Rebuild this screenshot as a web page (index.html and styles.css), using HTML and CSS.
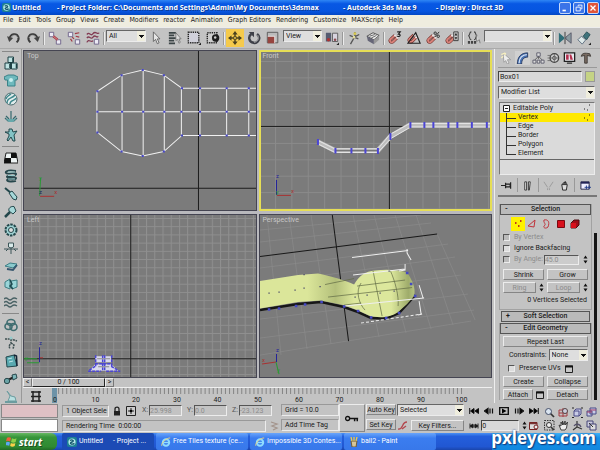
FILE: index.html
```html
<!DOCTYPE html>
<html lang="en">
<head>
<meta charset="utf-8">
<title>Untitled - Autodesk 3ds Max 9</title>
<link rel="stylesheet" href="styles.css">
</head>
<body>
<svg class="defs" aria-hidden="true">
  <symbol id="spin" viewBox="0 0 5 9"><path d="M2.500 0.500L4.500 3.500H.5zM2.500 8.500L.5 5.500H4.500z" fill="#111"/></symbol>
  <symbol id="ie" viewBox="0 0 10 10"><circle cx="5" cy="5.500" r="3.200" fill="none" stroke="#8fdcff" stroke-width="2"/><path d="M3 5.500H8" stroke="#8fdcff" stroke-width="1.300"/><path d="M.8 8.800C-.3 6 6 .5 9.200 1" fill="none" stroke="#f2d67a" stroke-width=".9"/></symbol>
  <symbol id="max" viewBox="0 0 10 10"><rect width="10" height="10" rx="2" fill="#1c7f95"/><circle cx="5" cy="5" r="3.600" fill="#b8ece9"/><path d="M3 3.500C5 2 8 4 5 5S4 8 7.500 6.500" fill="none" stroke="#14566e" stroke-width="1.400"/></symbol>
  <symbol id="magnet" viewBox="0 0 16 16"><path d="M12 7L7 12C4 15 1 11 4 8.500L9 4" fill="none" stroke="#70302c" stroke-width="4"/><path d="M12 7L7 12C4 15 1 11 4 8.500L9 4" fill="none" stroke="#d9837a" stroke-width="2.400"/><path d="M8.500 3.500L10 5.500M11 6.500L13 8" stroke="#eee" stroke-width="2"/></symbol>
  <symbol id="win" viewBox="0 0 8 8"><path d="M.5 1H7.500V7.500H.5z" fill="#c8c8c8" stroke="#222"/><path d="M0 1.500H8" stroke="#111" stroke-width="2"/></symbol>
</svg>

<header class="title">
  <svg class="app"><use href="#max"/></svg>
  <h1><span class="doc">Untitled</span><span class="folder">- Project Folder: C:\Documents and Settings\Admin\My Documents\3dsmax</span><span class="prod">- Autodesk 3ds Max 9</span><span>- Display : Direct 3D</span></h1>
  <div class="winbtns">
    <button aria-label="Minimize"><svg viewBox="0 0 12 12"><path d="M3 9H7" stroke="#fff" stroke-width="2"/></svg></button>
    <button aria-label="Restore"><svg viewBox="0 0 12 12"><path d="M5 4V2.500H9.500V7H8M2.500 5H7.500V9.500H2.500z" fill="none" stroke="#fff"/></svg></button>
    <button class="close" aria-label="Close"><svg viewBox="0 0 12 12"><path d="M3 3L9 9M9 3L3 9" stroke="#fff" stroke-width="1.600"/></svg></button>
  </div>
</header>

<nav class="menu">
  <a href="#">File</a><a href="#">Edit</a><a href="#">Tools</a><a href="#">Group</a><a href="#">Views</a><a href="#">Create</a><a href="#">Modifiers</a><a href="#">reactor</a><a href="#">Animation</a><a href="#">Graph Editors</a><a href="#">Rendering</a><a href="#">Customize</a><a href="#">MAXScript</a><a href="#">Help</a>
</nav>

<div class="toolbar">
  <button aria-label="Undo"><svg viewBox="0 0 16 16"><path d="M3 9C4 3 11 2 13 7C14 10 12 12 11 13" fill="none" stroke="#3c3c3c" stroke-width="2.400"/><path d="M4 8.500C5 4 11 3.500 12.500 8" fill="none" stroke="#bbb" stroke-width=".8"/><path d="M0 6L2.500 12.500L7 8z" fill="#444"/></svg></button>
  <button aria-label="Redo"><svg viewBox="0 0 16 16"><path d="M13 9C12 3 5 2 3 7C2 10 4 12 5 13" fill="none" stroke="#3c3c3c" stroke-width="2.400"/><path d="M12 8.500C11 4 5 3.500 3.500 8" fill="none" stroke="#bbb" stroke-width=".8"/><path d="M16 6L13.500 12.500L9 8z" fill="#444"/></svg></button>
  <i class="sep"></i>
  <button aria-label="Link"><svg viewBox="0 0 16 16"><g fill="#eceaf4" stroke="#6a5f86"><path d="M1.500 1.500H6.500V6.500H1.500zM9.500 10H14.500V15H9.500z"/></g><path d="M6 6L11 10" stroke="#a33844" stroke-width="2.600"/><path d="M6 6L11 10" stroke="#eaa" stroke-width=".8"/></svg></button>
  <button aria-label="Unlink"><svg viewBox="0 0 16 16"><g fill="#eceaf4" stroke="#6a5f86"><path d="M1.500 1.500H6.500V6.500H1.500zM9.500 10H14.500V15H9.500z"/></g><path d="M4 9L6 12M9 3L14 2M10 6L14 7M6 7L8 9" stroke="#a33844" stroke-width="1.400"/></svg></button>
  <button aria-label="Bind"><svg viewBox="0 0 16 16"><path d="M1 4C4 0 5 7 8 3S13 5 15 2M1 8C4 4 5 11 8 7S12 9 14 6M1 13C3 8 6 14 8 11" fill="none" stroke="#823a52" stroke-width="1.500"/><path d="M9.500 9.500H14.500V15H9.500z" fill="#eceaf4" stroke="#6a5f86"/></svg></button>
  <i class="sep"></i>
  <span class="dd filter"><select aria-label="Selection filter"><option>All</option></select></span>
  <button aria-label="Select"><svg viewBox="0 0 16 16"><path d="M5 1V12L7.500 9.500L9.500 14.500L11.500 13.500L9.500 9H12.500z" fill="#e6e6e6" stroke="#555" stroke-width=".9"/></svg></button>
  <button aria-label="Select by name"><svg viewBox="0 0 16 16"><path d="M1 2H9M1 5H7M1 8H9M1 11H7M1 14H8" stroke="#3c4547" stroke-width="2"/><path d="M9 2V11L11 9.500L12.500 14L14 13L12.500 9H15z" fill="#ddd" stroke="#666" stroke-width=".8"/></svg></button>
  <button aria-label="Region"><svg viewBox="0 0 16 16"><path d="M1.500 1.500H13.500V13.500H1.500z" fill="#d0d0da" stroke="#222" stroke-width="1.600" stroke-dasharray="1.500 1"/><path d="M16 13V16H13z" fill="#222"/></svg></button>
  <button aria-label="Window crossing"><svg viewBox="0 0 16 16"><path d="M1.500 2H12.500V13.500H1.500z" fill="#ccc" stroke="#222" stroke-width="1.600" stroke-dasharray="1.500 1"/><circle cx="11" cy="8" r="4.200" fill="#1c1c1c"/><circle cx="10.500" cy="7.500" r="1.400" fill="#ccc"/></svg></button>
  <i class="sep"></i>
  <button class="on" aria-label="Move"><svg viewBox="0 0 16 16"><path d="M8 2V14M2 8H14" stroke="#49411e" stroke-width="1.600"/><path d="M8 0L11 4H5zM8 16L5 12H11zM0 8L4 5V11zM16 8L12 11V5z" fill="#49411e"/><path d="M6.500 6.500H9.500V9.500H6.500z" fill="#f7cf55" stroke="#49411e"/></svg></button>
  <button aria-label="Rotate"><svg viewBox="0 0 16 16"><path d="M11.500 3.500C17 8 12 14.500 7.500 13.500C2 13 1 6 5 3.500" fill="none" stroke="#3e4048" stroke-width="2.800"/><path d="M12 4.500C15 8 12 13 8 13" fill="none" stroke="#bbb" stroke-width=".8"/><path d="M2 1H8V7z" fill="#3e4048"/></svg></button>
  <button aria-label="Scale"><svg viewBox="0 0 16 16"><path d="M1.500 1.500H13.500V13.500H1.500z" fill="#bbb" stroke="#555"/><path d="M2 6H10V14H2z" fill="#97453f"/><path d="M2 6H10V14" fill="none" stroke="#eee"/></svg></button>
  <span class="dd coord"><select aria-label="Coordinate system"><option>View</option></select></span>
  <button aria-label="Pivot"><svg viewBox="0 0 16 16"><path d="M1 2H7V12H1z" fill="#555b70"/><path d="M8.500 2.500H14.500V12H8.500z" fill="#d7d3df" stroke="#555"/><circle cx="4" cy="10" r="2" fill="#a33"/><circle cx="11.500" cy="10" r="1.500" fill="#8b4b50"/><path d="M16 13V16H13z" fill="#222"/></svg></button>
  <i class="sep"></i>
  <button aria-label="Manipulate"><svg viewBox="0 0 16 16"><path d="M9 1V6L4 15M3 5L13 9M8 7L14 4" fill="none" stroke="#555" stroke-width="1.500"/><circle cx="9" cy="3" r="1.700" fill="#d6c84f"/><circle cx="8" cy="7" r="1.500" fill="#e3dc9a"/></svg></button>
  <button aria-label="Keyboard override"><svg viewBox="0 0 16 16"><path d="M1 6L8 2L15 5L9 10z" fill="#eee" stroke="#444"/><path d="M1 6L9 10V15L2 11z" fill="#667"/><path d="M9 10L15 5V10L9 15z" fill="#999"/><path d="M4 6L10 4M6 8L12 5" stroke="#555"/></svg></button>
  <i class="sep"></i>
  <button aria-label="Snap 3D"><svg viewBox="0 0 16 16"><use href="#magnet" y="1" width="14" height="15"/><path d="M10.500 1H14L12 3.500C15 3.500 14.500 7 10.500 6" fill="none" stroke="#222" stroke-width="1.300"/></svg></button>
  <button aria-label="Angle snap"><svg viewBox="0 0 16 16"><use href="#magnet" y="1" width="14" height="14"/><path d="M1 14H15L10 2z" fill="none" stroke="#222" stroke-width="1.300"/></svg></button>
  <button aria-label="Percent snap"><svg viewBox="0 0 16 16"><use href="#magnet" y="1" width="14" height="15"/><path d="M10 7L15 1" stroke="#222"/><circle cx="10.500" cy="2.500" r="1.400" fill="none" stroke="#222"/><circle cx="14" cy="6" r="1.400" fill="none" stroke="#222"/></svg></button>
  <button aria-label="Spinner snap"><svg viewBox="0 0 16 16"><use href="#magnet" y="1" width="14" height="15"/><path d="M10 1H15V11H10z" fill="#ccc" stroke="#333"/><path d="M12.500 2L14 5H11zM12.500 10L11 7H14z" fill="#222"/></svg></button>
  <i class="sep"></i>
  <button aria-label="Named selections"><svg viewBox="0 0 16 16"><path d="M5 1C2 1 4 5 1.500 5.500C4 6 2 10 5 10M8 1C11 1 9 5 11.500 5.500C9 6 11 10 8 10" fill="none" stroke="#444" stroke-width="1.200"/><path d="M1 13H11" stroke="#444" stroke-width="3" stroke-dasharray="2.500 1"/><path d="M11 4V12L14 10L15 14" fill="#ddd" stroke="#777"/></svg></button>
  <span class="dd sets"><select aria-label="Selection sets"><option></option></select></span>
  <i class="sep"></i>
  <button aria-label="Mirror"><svg viewBox="0 0 16 16"><path d="M1 2L7 7V9L1 14z" fill="#2f6e78"/><path d="M15 2L9 7V9L15 14z" fill="#8b9aa0" stroke="#556"/><path d="M8 1V15" stroke="#333"/></svg></button>
  <button aria-label="Align"><svg viewBox="0 0 16 16"><path d="M1 10L5 6L10 10L6 15z" fill="#dfeaea" stroke="#567"/><path d="M7 6L11 1L15 4L11 10z" fill="#3f737b" stroke="#2c5057"/><path d="M16 13V16H13z" fill="#222"/></svg></button>
</div>

<main class="work">
  <aside class="side">
    <hr>
    <button aria-label="Rigid bodies"><svg viewBox="0 0 14 14"><g fill="#bfe3e3" stroke="#1f4145"><path d="M4 1H9.500V6.500H4zM1 7H6.500V13H1zM7.500 7H13V13H7.500z"/></g><path d="M9 2V6M6 8V12M12.500 8V12" stroke="#1f4145" stroke-width="1.600"/></svg></button>
    <button aria-label="Cloth"><svg viewBox="0 0 14 14"><path d="M0 3L4 1H10L14 3L13 6H11V12H3.500V6H1z" fill="#6fb9bd" stroke="#3b8288"/><circle cx="7" cy="6" r="2" fill="#c6eeee"/></svg></button>
    <button aria-label="Soft body"><svg viewBox="0 0 14 14"><circle cx="7" cy="7" r="6" fill="#e2eded" stroke="#496b6e"/><path d="M3 11C3 5 8 7 11 3M6 12C6 8 11 9 12 6M2 7C3 3 5 4 7 2" fill="none" stroke="#40888c" stroke-width="1.500"/></svg></button>
    <button aria-label="Rope"><svg viewBox="0 0 14 14"><path d="M7 1V9M1 8L4 11H10L13 8M2 6L5 9M12 6L9 9" fill="none" stroke="#35696e" stroke-width="1.200"/><path d="M2 9H12L9 12H5z" fill="#67a8ab"/></svg></button>
    <button aria-label="Deforming mesh"><svg viewBox="0 0 14 14"><path d="M5 1L8 1L9 4L13 3L10 7L11 13L9 13L7 9L4 13L3 12L5 8L5 6L1 4L5 4z" fill="#83c3c5" stroke="#22484c"/></svg></button>
    <hr>
    <button aria-label="Plane"><svg viewBox="0 0 14 14"><path d="M2 2H12L14 12H0z" fill="#eef4f4" stroke="#222"/><path d="M7 2H12L13 7H7zM1 7H7V12H0z" fill="#111"/></svg></button>
    <button aria-label="Spring"><svg viewBox="0 0 14 14"><path d="M12 2C2 0 0 4 3 4.500S13 3 12 5.500S2 6 3 8S13 7 12 9.500S3 9 3 11S9 13 12 12" fill="none" stroke="#27474c" stroke-width="1.800"/><path d="M4 3H11M4 6.500H11M4 10H11" stroke="#98cccd"/></svg></button>
    <button aria-label="Dashpot"><svg viewBox="0 0 14 14"><path d="M1 1L7 6" stroke="#23474b" stroke-width="2"/><path d="M5 6L8 4L13 10L12 13L9 12z" fill="#a6d8d9" stroke="#23474b"/></svg></button>
    <button aria-label="Linear dashpot"><svg viewBox="0 0 14 14"><path d="M1 12L6 7" stroke="#23474b" stroke-width="2.500"/><path d="M5 6C4 3 7 1 10 1.500L12 6L9 9z" fill="#a6d8d9" stroke="#23474b"/></svg></button>
    <button aria-label="Motor"><svg viewBox="0 0 14 14"><circle cx="7" cy="7" r="5.500" fill="#9fd3d4" stroke="#23474b" stroke-width="2" stroke-dasharray="2.500 1"/><circle cx="7" cy="7" r="2.500" fill="#ddd" stroke="#23474b"/></svg></button>
    <button aria-label="Wind"><svg viewBox="0 0 14 14"><path d="M0 8H14M7 4V13M4 8L2 10M10 8L12 10" stroke="#3c5558"/><path d="M4.500 2H9.500V6L7 7L4.500 6z" fill="#d9eaea" stroke="#3c5558"/></svg></button>
    <button aria-label="Toy car"><svg viewBox="0 0 14 14"><path d="M1 7L6 4L13 5L9 9z" fill="#8bcacd" stroke="#3d7e86"/><path d="M3 10L9 11L13 6" fill="none" stroke="#36566e" stroke-width="1.800"/></svg></button>
    <button aria-label="Fracture"><svg viewBox="0 0 14 14"><path d="M1 5L6 2V12L1 10zM7 4L13 3V10L8 12z" fill="#9ad5d8" stroke="#3c7d83"/><path d="M6 3L8 7L6 9L9 12" fill="none" stroke="#1d4a50" stroke-width="1.500"/></svg></button>
    <button aria-label="Water"><svg viewBox="0 0 14 14"><path d="M0 4Q2 2 4 4T8 4T13 4M0 7.500Q2 5.500 4 7.500T8 7.500T13 7.500M0 11Q2 9 4 11T8 11T13 11" fill="none" stroke="#4a6265" stroke-width="1.300"/></svg></button>
    <hr>
    <button aria-label="Constraint solver"><svg viewBox="0 0 14 14"><g fill="none" stroke="#3f6d70" stroke-width="1.600"><ellipse cx="7" cy="4.500" rx="4" ry="3"/><ellipse cx="4.500" cy="8.500" rx="3.500" ry="3"/><ellipse cx="9.500" cy="9" rx="3.500" ry="3.500"/></g></svg></button>
    <button aria-label="Rag doll"><svg viewBox="0 0 14 14"><path d="M1 3H7L13 5M7 3V7L5 10L6 13M7 7L10 9L9 13" fill="none" stroke="#3f5052" stroke-width="1.500" stroke-dasharray="2 .7"/><circle cx="7" cy="2" r="1.500" fill="#9cc"/></svg></button>
    <button aria-label="Hinge"><svg viewBox="0 0 14 14"><path d="M2 3L10 1L13 12L3 13z" fill="#59a9b0" stroke="#24494e"/><path d="M10 1L12.500 2L13 12" fill="none" stroke="#123" stroke-width="1.500"/><path d="M4 5L8 4M5 8L9 7" stroke="#bfe6e8"/></svg></button>
    <button aria-label="Point to point"><svg viewBox="0 0 14 14"><path d="M4 8L10 5" stroke="#222" stroke-width="2"/><circle cx="3" cy="9" r="2.700" fill="#6aa3a6" stroke="#29484b"/><path d="M8 3L12 2L13 6L9 8z" fill="#7fb7ba" stroke="#29484b"/></svg></button>
    <button aria-label="Prismatic"><svg viewBox="0 0 14 14"><path d="M3 1L6 6L4 11H12L11 7L7 6z" fill="#b8dfe0" stroke="#6c9c9f"/><path d="M1 12H13" stroke="#6c9c9f" stroke-width="2"/></svg></button>
  </aside>

  <section class="center">
    <div class="views">
      <div class="vp"><span>Top</span>
        <svg viewBox="24 51 231 158" preserveAspectRatio="xMinYMin slice">
          <path d="M197.500 50V212M23 187.500H257" stroke="#1d1d1d"/>
          <g fill="none" stroke="#f1f1f1"><path d="M97 91L121 75L142 70L163 75L181 88H257M97 132L121 151L142 155.500L163 151L181 135H257M97 111.500H257M96.500 91V132M121.500 75V151M142.500 70V155M163.500 75V151M180.500 88V135M199 88V135M225.500 88V135M247.500 88V135"/></g>
          <path d="M97 91h.1M121 75h.1M142 70h.1M163 75h.1M181 88h.1M199 88h.1M225.500 88h.1M247.500 88h.1M97 111.500h.1M121.500 111.500h.1M142.500 111.500h.1M163.500 111.500h.1M180.500 111.500h.1M199 111.500h.1M225.500 111.500h.1M247.500 111.500h.1M97 132h.1M121 151h.1M142 155.500h.1M163 151h.1M181 135h.1M199 135h.1M225.500 135h.1M247.500 135h.1" stroke="#4646c8" stroke-width="2" stroke-linecap="square"/>
          <path d="M39.500 195L40.500 177" stroke="#2a9a35"/><path d="M40 195.500H54" stroke="#a83232"/>
          <text x="39" y="179" fill="#2a9a35">y</text><text x="39" y="193" fill="#1c1c60">z</text><text x="54" y="193" fill="#a83232">x</text>
        </svg>
      </div>
      <div class="vp active"><span>Front</span>
        <svg viewBox="260 52 230 157" preserveAspectRatio="xMinYMin slice">
          <defs><pattern id="g1" x="274" y="61" width="16.400" height="16.400" patternUnits="userSpaceOnUse"><path d="M.5 0V16.400M0 .5H16.400" stroke="#8a8a8a"/></pattern></defs>
          <rect x="258" y="50" width="240" height="170" fill="url(#g1)"/>
          <path d="M388.500 50V212M258 126.500H492" stroke="#1d1d1d"/>
          <g fill="none"><path d="M317 142L334 150.500H377L389.500 136.500L409 125H492" stroke="#bdbdbd" stroke-width="5"/><path d="M317 140.500L334 149H377L389 134.500L409 123.500H492M317 144L334 152.500H377L390 138.500L410 127H492" stroke="#e6e6e6"/><path d="M334 150.500H377" stroke="#777" stroke-width="1.500"/></g>
          <path d="M317 139V145M334.500 148V153.500M350.500 148V153.500M364.500 148V153.500M377 148V154M389.500 133V140M409.500 122V128M423.500 122V128M432.500 122V128M447.500 122V128M456.500 122V128M471 122V128M486 122V128" stroke="#4b45d4" stroke-width="2"/>
          <path d="M275.500 180V195" stroke="#24249a"/><path d="M276 195.500H290" stroke="#a83232"/>
          <text x="275" y="178" fill="#24249a">z</text><text x="275" y="194" fill="#2a9a35">y</text><text x="290" y="193" fill="#a83232">x</text>
        </svg>
      </div>
      <div class="vp"><span>Left</span>
        <svg viewBox="24 214 231 162" preserveAspectRatio="xMinYMin slice">
          <defs><pattern id="g2" x="31" y="217" width="8.200" height="8.200" patternUnits="userSpaceOnUse"><path d="M.5 0V8.200M0 .5H8.200" stroke="#8f8f8f"/></pattern></defs>
          <rect x="23" y="213" width="240" height="170" fill="url(#g2)"/>
          <path d="M130.500 212V380M23 357.500H257" stroke="#1d1d1d"/>
          <path d="M95 355H111V361H95zM95 363H111L118 369.500H89z" fill="#d9d9ee"/>
          <path d="M95.500 354V366M102.500 354V370M104.500 354V370M111.500 354V366M95 362.500H111M88 370H101M106 370H120M95 365L89 369M111 365L118 369" stroke="#4b45d4" stroke-width="1.500" stroke-dasharray="3 1"/><path d="M97 357.500H110M98 365.500H109" stroke="#888"/>
          <path d="M39.500 346V361" stroke="#24249a"/><path d="M40 356.500H43" stroke="#a83232"/><path d="M24 357.500H37M39 361.500H27" stroke="#2a9a35"/>
          <text x="39" y="344" fill="#24249a">z</text><text x="25" y="359" fill="#2a9a35">y</text>
        </svg>
      </div>
      <div class="vp"><span>Perspective</span>
        <svg viewBox="259 214 232 162" preserveAspectRatio="xMinYMin slice">
          <defs><linearGradient id="skin" gradientUnits="userSpaceOnUse" x1="260" y1="0" x2="415" y2="0"><stop offset="0" stop-color="#dbe69a"/><stop offset=".3" stop-color="#dbe69a"/><stop offset=".48" stop-color="#b4c07b"/><stop offset=".6" stop-color="#dce79c"/><stop offset=".84" stop-color="#dce79c"/><stop offset=".95" stop-color="#9fac6b"/><stop offset="1" stop-color="#bdc985"/></linearGradient></defs>
          <path d="M259 229L420 214M259 241L430 222M259 267L447 243M259 283L454 256M259 300L460 274M259 318L467 293M259 337L473 309M259 354L470 320M266 214L280 354M288 214L306 348M310 214L330 343M352 214L378 336M373 214L405 332M394 214L430 328M415 214L452 324M436 233L474 319" stroke="#8b8b8b" stroke-width=".7"/>
          <path d="M259 255.500L436 233M331 212L347.500 340" stroke="#181818"/>
          <path d="M259 309L297 303L320 301L343 306L357 311L370 317L385 317.500L398 312L406 303L414 294" fill="none" stroke="#171717" stroke-width="2.500"/>
          <path d="M259 280L297 274L317 272.500C330 275 343 279 353 283.500C358 275 364 270 374 269.500C386 268 398 269 406 271.500C411 279 415 287 413 295L406 303L397 311C389 317 377 317 369 315L356 309L342 304L320 299.500L297 301L259 307.500z" fill="url(#skin)"/>
          <path d="M324 283.500L353 277.500M327 296L411 286.500M343 304L360 302M360 282C354 290 358 303 364 309M372 270L381 315M389 269C394 280 398 295 397 305M356 285L404 279" fill="none" stroke="#5f6843" stroke-width=".7"/>
          <path d="M351 256.500L407 249.500M406 248V252L410 259M352 274L404 268M404 263V269L398 270M418 284L422 297M344 305L423 297M418 300L420 313M417 314L421 313" fill="none" stroke="#efefef"/><path d="M360 322L420 313" stroke="#efefef" stroke-dasharray="3 2"/>
          <path d="M268 292h.1M278 291h.1M294 289h.1M303 287h.1M319 285.500h.1M354 296h.1M366 294h.1M379 292h.1M393 290h.1M303 273.500h.1M388 270h.1" stroke="#4a4a68" stroke-width="1.200" stroke-linecap="square"/>
          <path d="M268 308.500h.1M278 307.500h.1M295 305h.1M304 303.500h.1M320.500 301h.1M343 305.500h.1M357 310h.1M370 316.500h.1M385 317h.1M398 312h.1M414 295h.1M410 283h.1M406 272h.1" stroke="#4549c4" stroke-width="2.500" stroke-linecap="square"/>
          <path d="M275.500 353V361" stroke="#24249a"/><path d="M261 363L275 361" stroke="#a83232"/><path d="M275 361L278 373" stroke="#2a9a35"/>
          <text x="275" y="351" fill="#24249a">z</text><text x="261" y="361" fill="#a83232">x</text><text x="276" y="371" fill="#2a9a35">y</text>
        </svg>
      </div>
    </div>
    <div class="slider"><button aria-label="Previous frame">&lt;</button><button class="thumb">0 / 100</button><button aria-label="Next frame">&gt;</button></div>
    <svg class="ruler" viewBox="23 387 469 16" preserveAspectRatio="xMinYMin meet">
      <path d="M23 387.500H493" stroke="#efefef"/>
      <path d="M31 392H41M31 396.500H41M31 401H41M33 391V402M39 391V402" stroke="#222" stroke-width="1.500" fill="none"/>
      <rect x="52" y="388" width="5" height="15" fill="#6d93a8"/>
      <path d="M58.100 391H463" stroke="#858585" stroke-width="6" stroke-dasharray="1 3.070"/>
      <g text-anchor="middle"><text x="55" y="402">0</text><text x="95.500" y="402">10</text><text x="136" y="402">20</text><text x="177" y="402">30</text><text x="217.500" y="402">40</text><text x="258" y="402">50</text><text x="299" y="402">60</text><text x="339.500" y="402">70</text><text x="380" y="402">80</text><text x="421" y="402">90</text><text x="461.500" y="402">100</text></g>
    </svg>
  </section>

  <aside class="panel">
    <div class="tabs">
      <button aria-label="Create"><svg viewBox="0 0 14 14"><path d="M3 1L12 9L8 9L10 13L8 14L6 10L4 12z" fill="#eee" stroke="#999"/><path d="M1 3L5 1M1 7L3 5M6 1L5 4" stroke="#f7efc0" stroke-width="1.500"/></svg></button>
      <button class="sel" aria-label="Modify"><svg viewBox="0 0 14 14"><path d="M1 14C1 6 5 1 13 1V6C8 6 6 9 6 14z" fill="#4a74b5" stroke="#26365a"/><path d="M3 13C3 7 7 3 12 3" fill="none" stroke="#d7e2f2" stroke-width="1.500"/></svg></button>
      <button aria-label="Hierarchy"><svg viewBox="0 0 14 14"><path d="M7 4V8M7 5L2 10M7 5L12 10" stroke="#555"/><g fill="#ddd" stroke="#556"><path d="M5 1H9V5H5zM.5 9.500H4V13H.5zM5.500 9.500H8.500V13H5.500zM10 9.500H13.500V13H10z"/></g></svg></button>
      <button aria-label="Motion"><svg viewBox="0 0 14 14"><circle cx="8" cy="7" r="5" fill="#ccc" stroke="#444" stroke-width="1.500"/><circle cx="8" cy="7" r="2" fill="#eee" stroke="#444"/><path d="M0 4H3M0 7H3M0 10H3M8 2V12M3 7H13" stroke="#555" stroke-width=".8"/></svg></button>
      <button aria-label="Display"><svg viewBox="0 0 14 14"><path d="M1 1H13V11H1z" fill="#e8e8ee" stroke="#222" stroke-width="1.500"/><path d="M3 3H6V9H3zM7 3H9L11 9H8z" fill="#b4304e"/><path d="M4 13H10" stroke="#333" stroke-width="1.500"/></svg></button>
      <button aria-label="Utilities"><svg viewBox="0 0 14 14"><path d="M2 5C3 1 6 1 12 2L13 5L9 4V13H6V4z" fill="#796b62" stroke="#3c3733"/></svg></button>
    </div>
    <div class="name"><input aria-label="Object name" value="Box01"><button class="swatch" aria-label="Object color"></button></div>
    <span class="dd mods"><select aria-label="Modifier list"><option>Modifier List</option></select></span>
    <div class="stack">
      <ul>
        <li class="root"><svg viewBox="0 0 7 7"><path d="M.5 .5H6.500V6.500H.5zM2 3.500H5" fill="#fff" stroke="#222"/></svg>Editable Poly<svg class="dots" viewBox="0 0 8 8"><path d="M1 5h1M4 6h1M6 1h1" stroke="#222"/></svg></li>
        <li class="hit">Vertex<svg class="dots" viewBox="0 0 8 8"><path d="M1 4h1M4 6h1M6 1h1" stroke="#222"/></svg></li><li>Edge</li><li>Border</li><li>Polygon</li><li>Element</li>
      </ul>
    </div>
    <div class="stacktools">
      <button aria-label="Pin"><svg viewBox="0 0 12 12"><path d="M0 6H5M5 3V9M5 4.500H10V7.500H5M10.500 2.500V9.500" fill="none" stroke="#222" stroke-width="1.300"/></svg></button><i></i>
      <button aria-label="Show result"><svg viewBox="0 0 12 12"><path d="M3 2H5V11H3zM7 2H9L8 11H7z" fill="#eee" stroke="#333"/></svg></button><i></i>
      <button aria-label="Unique"><svg viewBox="0 0 12 12"><path d="M1 2L5 8M11 2L7 8M5 9V11M7 9V11" stroke="#999"/></svg></button>
      <button aria-label="Remove"><svg viewBox="0 0 12 12"><path d="M3 5H9L8 11H4z" fill="#ddd" stroke="#222"/><path d="M3 4L7 1L9 4z" fill="#333"/></svg></button><i></i>
      <button aria-label="Configure"><svg viewBox="0 0 12 12"><path d="M1 2H10V10H1z" fill="#eef" stroke="#224"/><path d="M1 3H10" stroke="#225" stroke-width="2"/><path d="M5 8H12M7 6V10M10 6V10" stroke="#223a88"/></svg></button>
    </div>
    <div class="rolls">
      <div class="rolllist">
        <section class="roll">
          <h2><b>-</b>Selection</h2>
          <div class="sub">
            <button class="on" aria-label="Vertex"><svg viewBox="0 0 10 10"><path d="M2 4h1.500M5 7h1.500M7 2h1.500" stroke="#a02" stroke-width="1.500"/></svg></button>
            <button aria-label="Edge"><svg viewBox="0 0 10 10"><path d="M1 7L8 1L7 8z" fill="none" stroke="#c0343c"/></svg></button>
            <button aria-label="Border"><svg viewBox="0 0 10 10"><path d="M3 1C7 0 9 3 7 8C5 10 2 9 3 7C6 5 2 4 3 1z" fill="none" stroke="#c0343c"/></svg></button>
            <button aria-label="Polygon"><svg viewBox="0 0 10 10"><path d="M1.500 1.500H8.500V8.500H1.500z" fill="#d8101c" stroke="#7a0810"/></svg></button>
            <button aria-label="Element"><svg viewBox="0 0 10 10"><path d="M1 4L4 1H9V6L6 9H1z" fill="#a10c18" stroke="#4e0a10"/><path d="M1 4H6V9H1z" fill="#d8101c"/></svg></button>
          </div>
          <label class="chk off"><input type="checkbox" disabled>By Vertex</label>
          <label class="chk"><input type="checkbox">Ignore Backfacing</label>
          <div class="chk off angle"><input type="checkbox" id="ba" disabled><label for="ba">By Angle:</label><input class="num" aria-label="Angle" value="45.0" disabled><svg class="spin"><use href="#spin"/></svg></div>
          <div class="pair"><button class="btn">Shrink</button><button class="btn">Grow</button></div>
          <div class="pair"><span><button class="btn" disabled>Ring</button><svg class="spin"><use href="#spin"/></svg></span><span><button class="btn" disabled>Loop</button><svg class="spin"><use href="#spin"/></svg></span></div>
          <p>0 Vertices Selected</p>
        </section>
        <section class="roll shut"><h2><b>+</b>Soft Selection</h2></section>
        <section class="roll">
          <h2><b>-</b>Edit Geometry</h2>
          <button class="btn wide">Repeat Last</button>
          <div class="con"><label for="con">Constraints:</label><span class="dd"><select id="con"><option>None</option></select></span></div>
          <div class="chk uv"><input type="checkbox" id="uv"><label for="uv">Preserve UVs</label><button class="mini" aria-label="Preserve settings"><svg viewBox="0 0 8 8"><use href="#win"/></svg></button></div>
          <div class="pair"><button class="btn">Create</button><button class="btn">Collapse</button></div>
          <div class="pair"><span><button class="btn">Attach</button><button class="mini" aria-label="Attach list"><svg viewBox="0 0 8 8"><use href="#win"/></svg></button></span><button class="btn">Detach</button></div>
        </section>
      </div>
      <div class="bar"></div>
    </div>
  </aside>
</main>

<footer class="status">
  <div class="listen"><div class="pink"></div><div></div></div>
  <div class="info">
    <div class="line">
      <span class="cell obj">1 Object Sele</span>
      <button class="ic" aria-label="Lock"><svg viewBox="0 0 10 10"><path d="M3 5V3C3 .5 7 .5 7 3V5" fill="none" stroke="#222" stroke-width="1.300"/><path d="M2 5H8V9.500H2z" fill="#222"/></svg></button>
      <button class="ic" aria-label="Absolute mode"><svg viewBox="0 0 10 10"><path d="M.5 .5H9.500V9.500H.5z" fill="#ccc" stroke="#222"/><path d="M5 2V8M2 5H8" stroke="#222"/><circle cx="5" cy="5" r="1.300"/></svg></button>
      <label>X:<input value="25.998"></label><label>Y:<input value="0.0"></label><label>Z:<input value="-23.123"></label>
    </div>
    <div class="line"><span class="cell grow">Rendering Time&nbsp; 0:00:00</span><button class="ic" aria-label="Notify"><svg viewBox="0 0 10 10"><path d="M2 1L8 3L3 5L8 7L4 9" fill="none" stroke="#a3948c" stroke-width="1.300"/></svg></button></div>
  </div>
  <div class="gridinfo"><span class="cell">Grid = 10.0</span><span class="cell">Add Time Tag</span></div>
  <button class="key" aria-label="Set keys"><svg viewBox="0 0 16 8"><circle cx="3" cy="4" r="2.300" fill="none" stroke="#111" stroke-width="1.500"/><path d="M5 4H15M11 4V7M14 4V7" stroke="#111" stroke-width="1.700"/></svg></button>
  <div class="keys"><button class="btn">Auto Key</button><button class="btn">Set Key</button></div>
  <div class="filters">
    <span class="dd"><select aria-label="Key set"><option>Selected</option></select></span>
    <div class="line"><button class="ic" aria-label="Tangent"><svg viewBox="0 0 10 10"><path d="M0 8C6 9 3 1 9 1M4 8L8 5" fill="none" stroke="#b3474e" stroke-width="1.300"/></svg></button><button class="btn grow">Key Filters...</button></div>
  </div>
  <div class="play">
    <div class="line">
      <button aria-label="Start"><svg viewBox="0 0 10 8"><path d="M.7 1V7M5 1.500L1.500 4L5 6.500zM9.500 1.500L6 4L9.500 6.500z" stroke="#111"/></svg></button>
      <button aria-label="Back"><svg viewBox="0 0 10 8"><path d="M4 1.500L.5 4L4 6.500zM6 1.500V6.500M8.500 1.500V6.500" stroke="#111" stroke-width="1.200"/></svg></button>
      <button aria-label="Play"><svg viewBox="0 0 10 8"><path d="M.7 .5H9.300V7.500H.7z" fill="none" stroke="#111" stroke-width="1.400"/><path d="M3 1.500L7.500 4L3 6.500z"/></svg></button>
      <button aria-label="Forward"><svg viewBox="0 0 10 8"><path d="M6 1.500L9.500 4L6 6.500zM1.500 1.500V6.500M4 1.500V6.500" stroke="#111" stroke-width="1.200"/></svg></button>
      <button aria-label="End"><svg viewBox="0 0 10 8"><path d="M9.300 1V7M5 1.500L8.500 4L5 6.500zM.5 1.500L4 4L.5 6.500z" stroke="#111"/></svg></button>
    </div>
    <div class="line">
      <button aria-label="Key mode"><svg viewBox="0 0 10 8"><path d="M1 1.500V6.500M9 1.500V6.500M1 4L4 2V6zM9 4L6 2V6zM3 4H7" stroke="#222"/></svg></button>
      <input aria-label="Frame" value="0"><svg class="spin"><use href="#spin"/></svg>
      <button aria-label="Time configuration"><svg viewBox="0 0 10 8"><path d="M.5 .5H8V7.500H.5z" fill="#ddd" stroke="#722"/><path d="M.5 1.500H8" stroke="#733" stroke-width="1.500"/><circle cx="7" cy="5" r="2" fill="#eee" stroke="#722"/></svg></button>
    </div>
  </div>
  <div class="nav">
    <button aria-label="Zoom"><svg viewBox="0 0 11 11"><path d="M6 6L10 10" stroke="#333" stroke-width="1.700"/><circle cx="4.500" cy="4.500" r="3" fill="#d9e4f0" stroke="#45506a"/></svg></button>
    <button aria-label="Zoom all"><svg viewBox="0 0 11 11"><path d="M1 3H9V9H1zM5 1V10M1 6H9" fill="none" stroke="#a33a42"/><circle cx="7" cy="4" r="2.500" fill="#ccd" stroke="#544"/></svg></button>
    <button aria-label="Extents"><svg viewBox="0 0 11 11"><path d="M2 4H7V9H2zM2 4L4 2H9V7L7 9" fill="#c8cbe6" stroke="#4b4b86"/><path d="M0 1H2M9 1H11M0 10.500H2M9 10.500H11" stroke="#222"/></svg></button>
    <button aria-label="Extents all"><svg viewBox="0 0 11 11"><path d="M1 4H6V9H1zM4 1H10V7H4z" fill="#c8cbe6" stroke="#4b4b86"/><path d="M1 5H6M4 3H10" stroke="#a33a62"/></svg></button>
    <button aria-label="Region zoom"><svg viewBox="0 0 11 11"><path d="M.5 .5H10V10H.5z" fill="none" stroke="#333" stroke-dasharray="1.500 1"/><circle cx="5" cy="5" r="2.500" fill="#eee" stroke="#333"/><path d="M7 7L10 10" stroke="#333" stroke-width="1.500"/></svg></button>
    <button aria-label="Pan"><svg viewBox="0 0 11 11"><path d="M3 10L1 5L3 6V2L4.500 5V1L6 5L7 1L7.500 5L9.500 2L8.500 8L7 10z" fill="#eee" stroke="#333" stroke-width=".9"/></svg></button>
    <button aria-label="Orbit"><svg viewBox="0 0 11 11"><path d="M5 1V7L1 10M5 7L10 9" fill="none" stroke="#333" stroke-width="1.200"/><path d="M2 6C4 3 8 4 9 7" fill="none" stroke="#54506a" stroke-width="1.300"/></svg></button>
    <button aria-label="Maximize"><svg viewBox="0 0 11 11"><path d="M1 1H7V7H1z" fill="#ccd" stroke="#447"/><path d="M4 4H10V10H4z" fill="#ddd" stroke="#447"/><path d="M3 3L7 7" stroke="#333"/></svg></button>
  </div>
</footer>

<div class="taskbar">
  <button class="start"><svg viewBox="0 0 12 12"><path d="M1 2Q3 .5 5.500 2L4.500 6Q2 4.500 0 6z" fill="#f0603a"/><path d="M6.500 2.500Q9 4 11.500 2.500L10.500 6.500Q8 8 5.500 6.500z" fill="#8ed04a"/><path d="M0 7Q2 5.500 4.300 7L3.500 10.500Q1 9.500-1 10.500z" fill="#5ca8f5"/><path d="M5.300 7.500Q8 9 10.200 7.500L9.500 11Q7 12.500 4.500 11z" fill="#fbd04a"/></svg>start</button>
  <button class="task cur"><svg viewBox="0 0 10 10"><use href="#max"/></svg><span>Untitled</span><span class="tail">- Project ...</span></button>
  <button class="task"><svg viewBox="0 0 10 10"><use href="#ie"/></svg>Free Tiles texture (ce...</button>
  <button class="task"><svg viewBox="0 0 10 10"><use href="#ie"/></svg>Impossible 3D Contes...</button>
  <button class="task"><svg viewBox="0 0 10 10"><path d="M2 4H8L7 10H3z" fill="#d5c69a" stroke="#6d5a34"/><path d="M3 4L2 0M5 4V0M7 4L8 0" stroke="#f0c94a" stroke-width="1.300"/></svg>ball2 - Paint</button>
  <div class="tray"></div>
  <strong class="mark">pxleyes.com</strong>
</div>
</body>
</html>
```
FILE: styles.css
```css
* { box-sizing: border-box; margin: 0; padding: 0; }
:root { --face: #c3c3c3; --hi: #ececec; --lo: #858585; }
body {
  height: 100vh; min-height: 450px; display: flex; flex-direction: column;
  background: var(--face); color: #1a1a1a;
  font: 7px/9px Roboto, "Liberation Sans", sans-serif;
}
button, input, select { font: inherit; color: inherit; border: 0; background: none; border-radius: 0; min-width: 0; }
button { white-space: nowrap; }
svg { display: block; }
.defs { position: absolute; width: 0; height: 0; }
.title, .menu, .toolbar, .status, .taskbar { flex: none; }

.title { height: 15px; display: flex; align-items: center; padding: 0 1px 0 2px; gap: 1px;
  background: linear-gradient(#2f86f5, #0858e4 25%, #0655e0 75%, #0347c4); color: #fff; }
.app { width: 9px; height: 9px; }
.title h1 { flex: 1; display: flex; font: bold 7px/9px "Open Sans", sans-serif; white-space: nowrap; text-shadow: 1px 1px #0b3a94; }
.doc { width: 45px; }
.folder { width: 286px; }
.prod { width: 93px; }
.winbtns { display: flex; gap: 2px; }
.winbtns button { width: 12px; height: 12px; border: 1px solid #c4d8fa; border-radius: 2px; background: #3b74e8; }
.winbtns .close { background: #e0563a; }

.menu { height: 12px; display: flex; gap: 5px; padding: 1px 3px; background: #efeddf; font: 7px/9px "DejaVu Sans Condensed", "DejaVu Sans", sans-serif; }
.menu a { color: #1a1a1a; text-decoration: none; white-space: nowrap; }

.toolbar { height: 22px; display: flex; align-items: center; gap: 1px; padding: 0 5px; border-top: 1px solid var(--hi); border-bottom: 1px solid #aaa; }
.toolbar button { width: 18px; height: 18px; padding: 2px; flex: none; }
.toolbar .on { background: #f5ca4c; }
.toolbar svg { width: 14px; height: 14px; }
.sep { width: 2px; height: 13px; border-left: 1px solid #999; border-right: 1px solid var(--hi); flex: none; }

.dd { position: relative; display: flex; height: 12px; min-width: 0; }
.dd select { appearance: none; width: 100%; height: 100%; padding: 0 9px 0 2px; background: #dedede;
  border: 1px solid; border-color: #666 var(--hi) var(--hi) #666; }
.dd::after { content: ""; position: absolute; right: 1px; top: 1px; bottom: 1px; width: 8px;
  background: linear-gradient(#111, #111) 50% 40%/5px 1px no-repeat, linear-gradient(#111, #111) 50% 50%/3px 1px no-repeat, linear-gradient(#111, #111) 50% 62%/1px 1px no-repeat, #efeddd;
  pointer-events: none; }
.toolbar .dd { align-self: flex-start; margin-top: 2px; flex: none; }
.filter { width: 40px; }
.coord { width: 39px; }
.sets { width: 68px; }

.work { flex: 1; display: grid; grid-template: minmax(0, 1fr) / 22px minmax(0, 1fr) 106px; min-height: 0; }
.side { display: flex; flex-direction: column; align-items: center; gap: 4px; padding-top: 2px; border-right: 1px solid #999; min-height: 0; }
.side button, .side svg { width: 14px; height: 14px; flex: none; }
.side hr { width: 17px; border: 0; border-top: 1px solid #888; flex: none; }

.center { display: flex; flex-direction: column; min-height: 0; padding: 0 2px 0 1px; }
.views { flex: 1; min-height: 0; display: grid; grid-template: minmax(0, 50fr) minmax(0, 51fr) / minmax(0, 1fr) minmax(0, 1fr); gap: 3px 2px; padding: 1px 0 0; background: #b9b9bd; }
.vp { position: relative; display: flex; background: #7b7b7b; border: 1px solid #454552; }
.vp.active { border: 2px solid #e6de56; }
.vp > svg { flex: 1; min-width: 0; width: 100%; height: 100%; font-size: 6px; }
.vp span { position: absolute; left: 3px; top: 1px; color: #c9c9c9; }
.vp.active span { left: 2px; top: 0; }
.slider { display: flex; height: 9px; flex: none; }
.slider button { width: 9px; border: 1px solid; border-color: var(--hi) #777 #777 var(--hi); line-height: 7px; }
.slider .thumb { width: 73px; border-color: var(--hi) #222 #222 var(--hi); }
.ruler { width: 100%; height: 16px; fill: #222; flex: none; }

.panel { display: flex; flex-direction: column; padding: 2px 3px 3px; border-left: 1px solid #eee; min-height: 0; }
.tabs { display: flex; justify-content: space-between; padding: 0 4px 2px 1px; border-bottom: 1px solid #999; }
.tabs button { width: 15px; height: 14px; padding: 1px; }
.tabs svg { width: 13px; height: 12px; }
.tabs .sel { background: #d0d0d0; }
.name { display: flex; gap: 3px; padding: 3px 2px 4px 0; }
.name input { flex: 1; height: 11px; padding: 0 1px; background: #d8d8d8; border: 1px solid; border-color: #444 var(--hi) var(--hi) #444; }
.swatch { width: 10px; height: 11px; background: #c5d384; border: 1px solid #999; }
.mods { height: 13px; margin-right: 2px; flex: none; }
.stack { height: 73px; margin: 3px 2px 0 1px; background: #dadada; border: 1px solid; border-color: #777 var(--hi) var(--hi) #777; flex: none; }
.stack ul { list-style: none; border-bottom: 1px solid #666; padding-bottom: 1px; }
.stack li { height: 9px; padding-left: 18px; position: relative; }
.stack li:not(.root)::before { content: ""; position: absolute; left: 6px; top: -4px; width: 9px; height: 9px; border: solid #333; border-width: 0 0 1px 1px; }
.stack .root { display: flex; align-items: center; gap: 3px; padding-left: 3px; height: 10px; }
.stack .root + li::before { top: 0; height: 5px; }
.stack .root svg { width: 7px; height: 7px; }
.stack .hit { background: #ffe900; }
.stack li .dots { position: absolute; right: 3px; top: 1px; width: 8px; height: 8px; }
.stacktools { display: flex; align-items: center; justify-content: space-between; height: 22px; padding: 0 6px 0 3px; border-bottom: 2px solid #777; flex: none; }
.stacktools i { width: 1px; height: 14px; background: #999; }
.stacktools svg { width: 11px; height: 11px; }
.rolls { flex: 1; display: flex; min-height: 0; overflow: hidden; padding-top: 7px; }
.rolllist { flex: 1; padding-left: 1px; display: flex; flex-direction: column; gap: 1px; min-width: 0; }
.bar { width: 3px; margin: 29px 0 0 2px; background: #151515; }
.roll { display: flex; flex-direction: column; gap: 2px; padding: 0 3px 3px; border: 1px solid #a2a2a2; border-top: 0; flex: none; }
.roll:last-child { border-bottom: 0; padding-bottom: 0; }
.roll.shut { padding-bottom: 0; border: 0; }
.roll h2 { position: relative; margin: 0 -3px; height: 11px; font-size: 7px; line-height: 9px; font-weight: 500; text-align: center; border: 1px solid #555; background: #bababa; }
.roll.shut h2 { margin: 0 -1px 0 -1px; }
.roll h2 b { position: absolute; left: 4px; }
.sub { display: flex; justify-content: space-around; padding: 0 6px 0 8px; }
.sub button { width: 14px; height: 14px; padding: 2px; }
.sub svg { width: 10px; height: 10px; }
.sub .on { background: #fff200; }
.chk { display: flex; align-items: center; height: 9px; gap: 4px; }
.chk input[type=checkbox] { appearance: none; width: 7px; height: 7px; background: #ddd; border: 1px solid; border-color: #555 var(--hi) var(--hi) #555; flex: none; }
.off { color: #8b8b8b; }
.off input[type=checkbox] { background: #bbb; }
.angle { margin-bottom: 3px; }
.num { flex: 1; height: 10px; border: 1px solid; border-color: #555 var(--hi) var(--hi) #555; margin-left: -3px; background: #ccc; }
.spin { width: 5px; height: 9px; flex: none; }
.pair { display: grid; grid-template-columns: 1fr 1fr; gap: 3px; }
.pair span { display: flex; gap: 3px; align-items: center; min-width: 0; }
.pair span .btn { flex: 1; }
.btn { height: 11px; line-height: 8px; border: 1px solid; border-color: var(--hi) var(--lo) var(--lo) var(--hi); }
.btn:disabled { color: #8b8b8b; }
.roll p { text-align: right; padding: 1px 1px 1px 0; }
.con { display: flex; align-items: center; gap: 2px; padding-left: 6px; }
.con .dd { flex: 1; }
.uv { padding-left: 5px; height: 11px; }
.mini, .mini svg { width: 8px; height: 8px; flex: none; }

.status { height: 30px; display: flex; padding-top: 1px; white-space: nowrap; }
.listen { width: 57px; display: grid; gap: 1px; margin: 0 4px 1px 1px; }
.listen div { background: #fff; border: 1px solid #888; }
.listen .pink { background: #dfc0c4; }
.info, .gridinfo, .keys, .filters, .play { display: grid; grid-template-rows: 13px 13px; gap: 2px; }
.info { width: 218px; }
.line { display: flex; align-items: center; gap: 2px; min-width: 0; }
.cell { height: 12px; line-height: 10px; padding-left: 3px; border: 1px solid; border-color: #999 var(--hi) var(--hi) #999; }
.obj { width: 47px; flex: none; }
.grow { flex: 1; }
.ic { width: 12px; height: 12px; padding: 1px; flex: none; }
.ic svg { width: 10px; height: 10px; }
.line label { display: flex; align-items: center; gap: 1px; margin-left: 3px; color: #555; }
.line label input { width: 33px; height: 11px; color: #8b8b8b; border: 1px solid; border-color: #555 var(--hi) var(--hi) #555; }
.gridinfo { width: 58px; margin-left: 1px; }
.key { width: 26px; height: 28px; border: 1px solid; border-color: var(--hi) #888 #888 var(--hi); padding: 5px; }
.keys { width: 30px; margin-left: 1px; }
.filters { width: 67px; margin-left: 1px; }
.play { width: 70px; margin-left: 5px; }
.play .line { justify-content: space-between; }
.play button, .play button svg { width: 10px; height: 8px; flex: none; }
.play input { width: 38px; height: 11px; background: #d8d8d8; border: 1px solid; border-color: #444 var(--hi) var(--hi) #444; }
.nav { display: grid; grid-template-columns: repeat(4, 11px); gap: 2px 3px; align-content: center; margin-left: auto; padding-right: 3px; }
.nav svg { width: 11px; height: 11px; }

.taskbar { position: relative; height: 17px; display: flex; gap: 2px; background: linear-gradient(#4a90f4, #245fdc 20%, #2157d2 80%, #1a45ab); color: #fff; }
.start { width: 57px; margin-right: 3px; display: flex; align-items: center; gap: 2px; padding-left: 6px; background: linear-gradient(#67b862, #36943a 25%, #2f8a32 80%, #226b26); border-radius: 0 6px 6px 0; font: italic bold 10px/14px "Open Sans", sans-serif; text-shadow: 1px 1px #1c4d20; }
.start svg { width: 11px; height: 11px; }
.task { width: 92px; display: flex; align-items: center; gap: 2px; padding: 1px 5px; background: linear-gradient(#6aa5fa, #3b7df0 30%, #3878ea); border-radius: 2px; }
.task svg { width: 10px; height: 10px; flex: none; }
.task.cur { background: #1c4bb5; }
.tail { margin-left: 8px; }
.tray { margin-left: auto; width: 108px; background: linear-gradient(#3fb0f5, #1590ea 30%, #1288de); }
.mark { position: absolute; right: 4px; bottom: 2px; font: bold 17px/20px "Open Sans", sans-serif; text-shadow: 0 0 2px #123c80, 1px 1px 1px #123c80; }
```
